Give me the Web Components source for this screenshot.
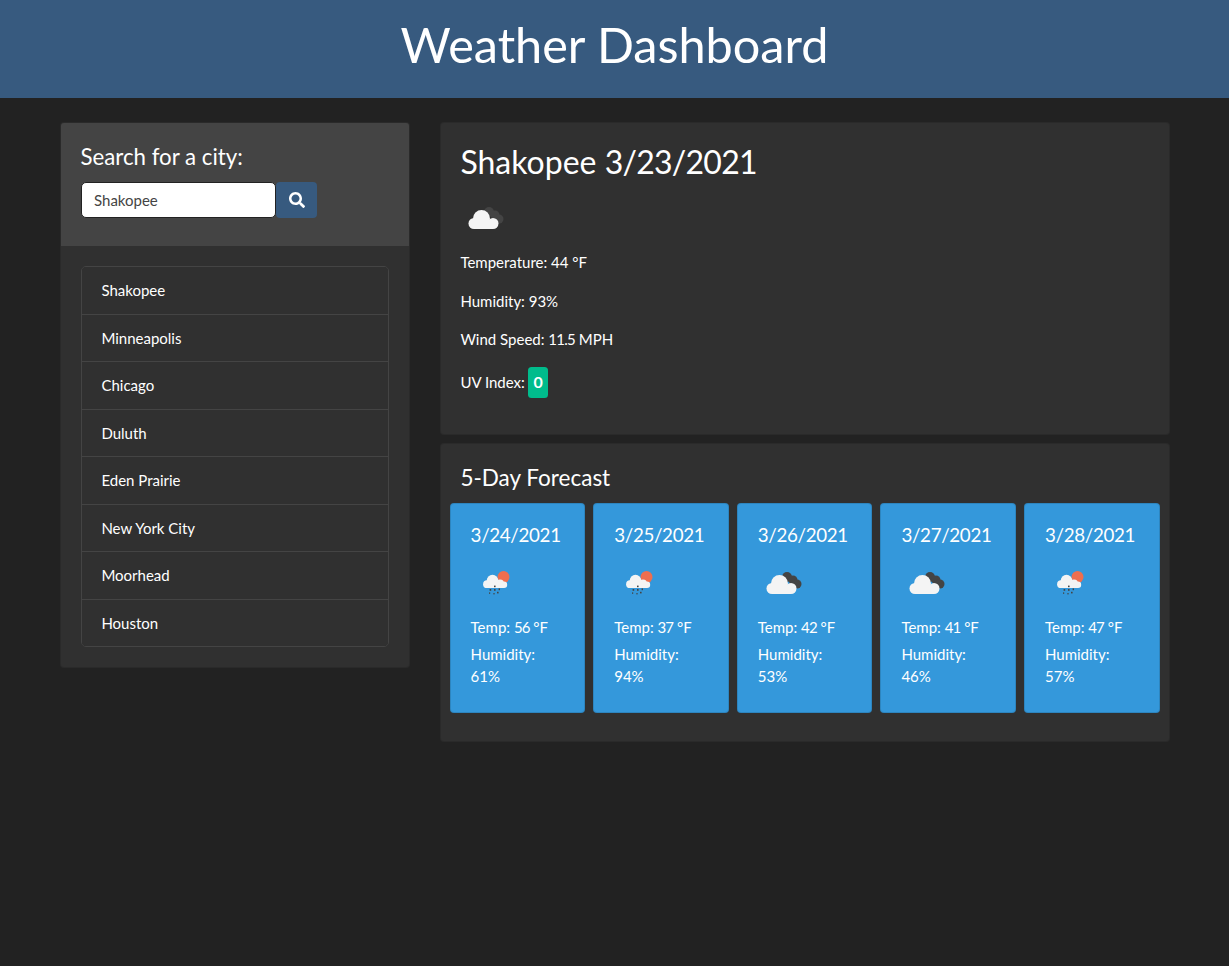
<!DOCTYPE html>
<html lang="en">
<head>
<meta charset="utf-8">
<title>Weather Dashboard</title>
<style>
html,body{margin:0;padding:0;background:#222;color:#fff;font:15px/22.5px Lato,"Noto Sans",sans-serif;min-height:966px}
</style>
</head>
<body>
<weather-app>
  <app-header slot="header">Weather Dashboard</app-header>
  <search-sidebar slot="side">
    <city-item>Shakopee</city-item>
    <city-item>Minneapolis</city-item>
    <city-item>Chicago</city-item>
    <city-item>Duluth</city-item>
    <city-item>Eden Prairie</city-item>
    <city-item>New York City</city-item>
    <city-item>Moorhead</city-item>
    <city-item>Houston</city-item>
  </search-sidebar>
  <current-weather slot="main" city="Shakopee" date="3/23/2021" temp="44" humidity="93" wind="11.5" uv="0"></current-weather>
  <forecast-panel slot="main">
    <forecast-card date="3/24/2021" icon="rain" temp="56" humidity="61"></forecast-card>
    <forecast-card date="3/25/2021" icon="rain" temp="37" humidity="94"></forecast-card>
    <forecast-card date="3/26/2021" icon="clouds" temp="42" humidity="53"></forecast-card>
    <forecast-card date="3/27/2021" icon="clouds" temp="41" humidity="46"></forecast-card>
    <forecast-card date="3/28/2021" icon="rain" temp="47" humidity="57"></forecast-card>
  </forecast-panel>
</weather-app>
<script>
const make = (name, html) => customElements.define(name, class extends HTMLElement {
  connectedCallback() {
    if (this.shadowRoot) return;
    const r = this.attachShadow({mode: 'open'});
    const a = n => this.getAttribute(n) || '';
    r.innerHTML = typeof html === 'function' ? html(a) : html;
  }
});

make('weather-app', `<style>
:host{display:block}
.layout{display:flex;gap:30px;padding:24px 59px 0 60px;align-items:flex-start}
.side{flex:0 0 350px;display:block}
.main{flex:0 0 730px;display:flex;flex-direction:column;gap:8px}
</style>
<slot name="header"></slot>
<div class="layout">
  <div class="side"><slot name="side"></slot></div>
  <div class="main"><slot name="main"></slot></div>
</div>`);

make('app-header', `<style>
:host{display:block;background:#375a7f;height:98px;box-sizing:border-box;text-align:center}
h1{margin:0;padding-top:14px;font-size:48.6px;line-height:60px;font-weight:400;color:#fff}
</style><h1><slot></slot></h1>`);

make('search-sidebar', `<style>
:host{display:block;background:#303030;border:1px solid rgba(0,0,0,.125);border-radius:4px;box-sizing:border-box;overflow:hidden}
.head{background:#444;height:123px;box-sizing:border-box;padding:20px 20px 0}
h4{margin:0 0 11px -.5px;font-size:22.25px;line-height:27px;font-weight:400}
.row{display:flex;align-items:flex-start}
input{box-sizing:border-box;width:195px;height:36px;margin:1px 0 0;border:1px solid #222;border-radius:5px;background:#fff;color:#444;font:15px Lato,sans-serif;padding:0 12px;outline:none}
button{width:41px;height:36px;margin-top:1px;border:0;border-radius:4px;background:#375a7f;display:flex;align-items:center;justify-content:center;padding:0}
svg{width:16px;height:16px;fill:#fff;display:block}
.body{padding:20px}
.list{border:1px solid #444;border-radius:5px;overflow:hidden}
</style>
<div class="head">
  <h4>Search for a city:</h4>
  <div class="row">
    <input type="text" value="Shakopee" aria-label="City">
    <button aria-label="Search"><svg viewBox="0 0 512 512"><path d="M505 442.7L405.3 343c-4.5-4.5-10.6-7-17-7H372c27.6-35.3 44-79.7 44-128C416 93.1 322.9 0 208 0S0 93.1 0 208s93.1 208 208 208c48.3 0 92.7-16.4 128-44v16.3c0 6.4 2.5 12.5 7 17l99.7 99.7c9.4 9.4 24.6 9.4 33.9 0l28.3-28.3c9.4-9.4 9.4-24.6.1-34zM208 336c-70.7 0-128-57.2-128-128 0-70.7 57.2-128 128-128 70.7 0 128 57.2 128 128 0 70.7-57.2 128-128 128z"/></svg></button>
  </div>
</div>
<div class="body"><div class="list"><slot></slot></div></div>`);

make('city-item', `<style>
:host{display:block;height:47.5px;box-sizing:border-box;padding:12px 19.4px;border-bottom:1px solid #444;background:#303030;color:#fff}
:host(:last-child){border-bottom:0;height:46.5px}
</style><slot></slot>`);

const cloudWhite = `<g fill="#f4f4f4"><circle cx="14" cy="30.5" r="5.5"/><circle cx="21.5" cy="25.5" r="8.5"/><circle cx="33" cy="30.5" r="5.5"/><rect x="14" y="28" width="19" height="8"/></g>`;
const icons = {
  clouds: d => `<svg viewBox="0 0 50 50" width="50" height="50"><g fill="${d}"><circle cx="29" cy="19" r="5"/><circle cx="35" cy="22" r="4.5"/><circle cx="39" cy="26" r="4.5"/></g>${cloudWhite}</svg>`,
  rain: () => `<svg viewBox="0 0 50 50" width="50" height="50"><circle cx="32.5" cy="19" r="6" fill="#ee6e4f"/><g fill="#f4f4f4"><circle cx="16" cy="26.2" r="3.9"/><circle cx="21.5" cy="22.6" r="5.8"/><circle cx="29" cy="25.5" r="4"/><circle cx="33" cy="26.8" r="3.2"/><rect x="16" y="24" width="17" height="6"/></g><g fill="#444"><rect x="23" y="27.6" width="1.6" height="1.6"/><rect x="18.6" y="31" width="1.6" height="1.8"/><rect x="23" y="31" width="1.6" height="1.8"/><rect x="27.6" y="30.4" width="1.4" height="1.8"/><rect x="18" y="34.4" width="1.2" height="1.4"/><rect x="22.4" y="35" width="1.2" height="1.4"/><rect x="26" y="33.8" width="1.6" height="1.6"/></g></svg>`
};

make('current-weather', a => `<style>
:host{display:block;background:#303030;border:1px solid rgba(0,0,0,.125);border-radius:4px;height:313px;box-sizing:border-box;padding:20px 20px 20px 19.4px}
h2{margin:0 0 11.6px;font-size:32px;line-height:38.4px;font-weight:400}
h2 span{letter-spacing:-.75px}
svg{display:block}
.icon{height:50px;margin-bottom:8.4px}
p{margin:0 0 16px}
.n{letter-spacing:-.75px}
.uv{display:inline-block;background:#00bc8c;color:#fff;font-weight:700;font-size:16px;padding:4px 0 4.5px;margin-left:-.6px;width:20px;text-align:center;border-radius:3.5px;line-height:22.5px;box-sizing:border-box}
</style>
<h2>${a('city')} <span>${a('date')}</span></h2>
<div class="icon">${icons.clouds('#444')}</div>
<p>Temperature: ${a('temp')} °F</p>
<p>Humidity: ${a('humidity')}%</p>
<p>Wind Speed: <span class="n">${a('wind')}</span> MPH</p>
<p>UV Index: <span class="uv">${a('uv')}</span></p>`);

make('forecast-panel', `<style>
:host{display:block;background:#303030;border:1px solid rgba(0,0,0,.125);border-radius:4px;height:299px;box-sizing:border-box;padding:20px 9.4px 0 8.6px}
h4{margin:0 10.4px 12px 10.8px;font-size:22.5px;line-height:27px;font-weight:400}
.cards{display:grid;grid-template-columns:repeat(5,1fr);gap:8px}
</style><h4>5-Day Forecast</h4><div class="cards"><slot></slot></div>`);

make('forecast-card', a => `<style>
:host{display:block;background:#3498db;border:1px solid rgba(0,0,0,.125);border-radius:4px;height:210px;box-sizing:border-box;padding:20px;color:#fff}
h5{margin:0 0 11.5px;font-size:18.75px;line-height:22.5px;font-weight:400;letter-spacing:-.33px;white-space:nowrap}
svg{display:block}
.icon{height:50px;margin-bottom:7.5px}
p{margin:0 0 4.5px}
.n{letter-spacing:-.9px}
</style>
<h5>${a('date')}</h5>
<div class="icon">${icons[a('icon')]('#444')}</div>
<p>Temp: <span class="n">${a('temp')}</span> °F</p>
<p>Humidity: ${a('humidity')}%</p>`);
</script>
</body>
</html>
